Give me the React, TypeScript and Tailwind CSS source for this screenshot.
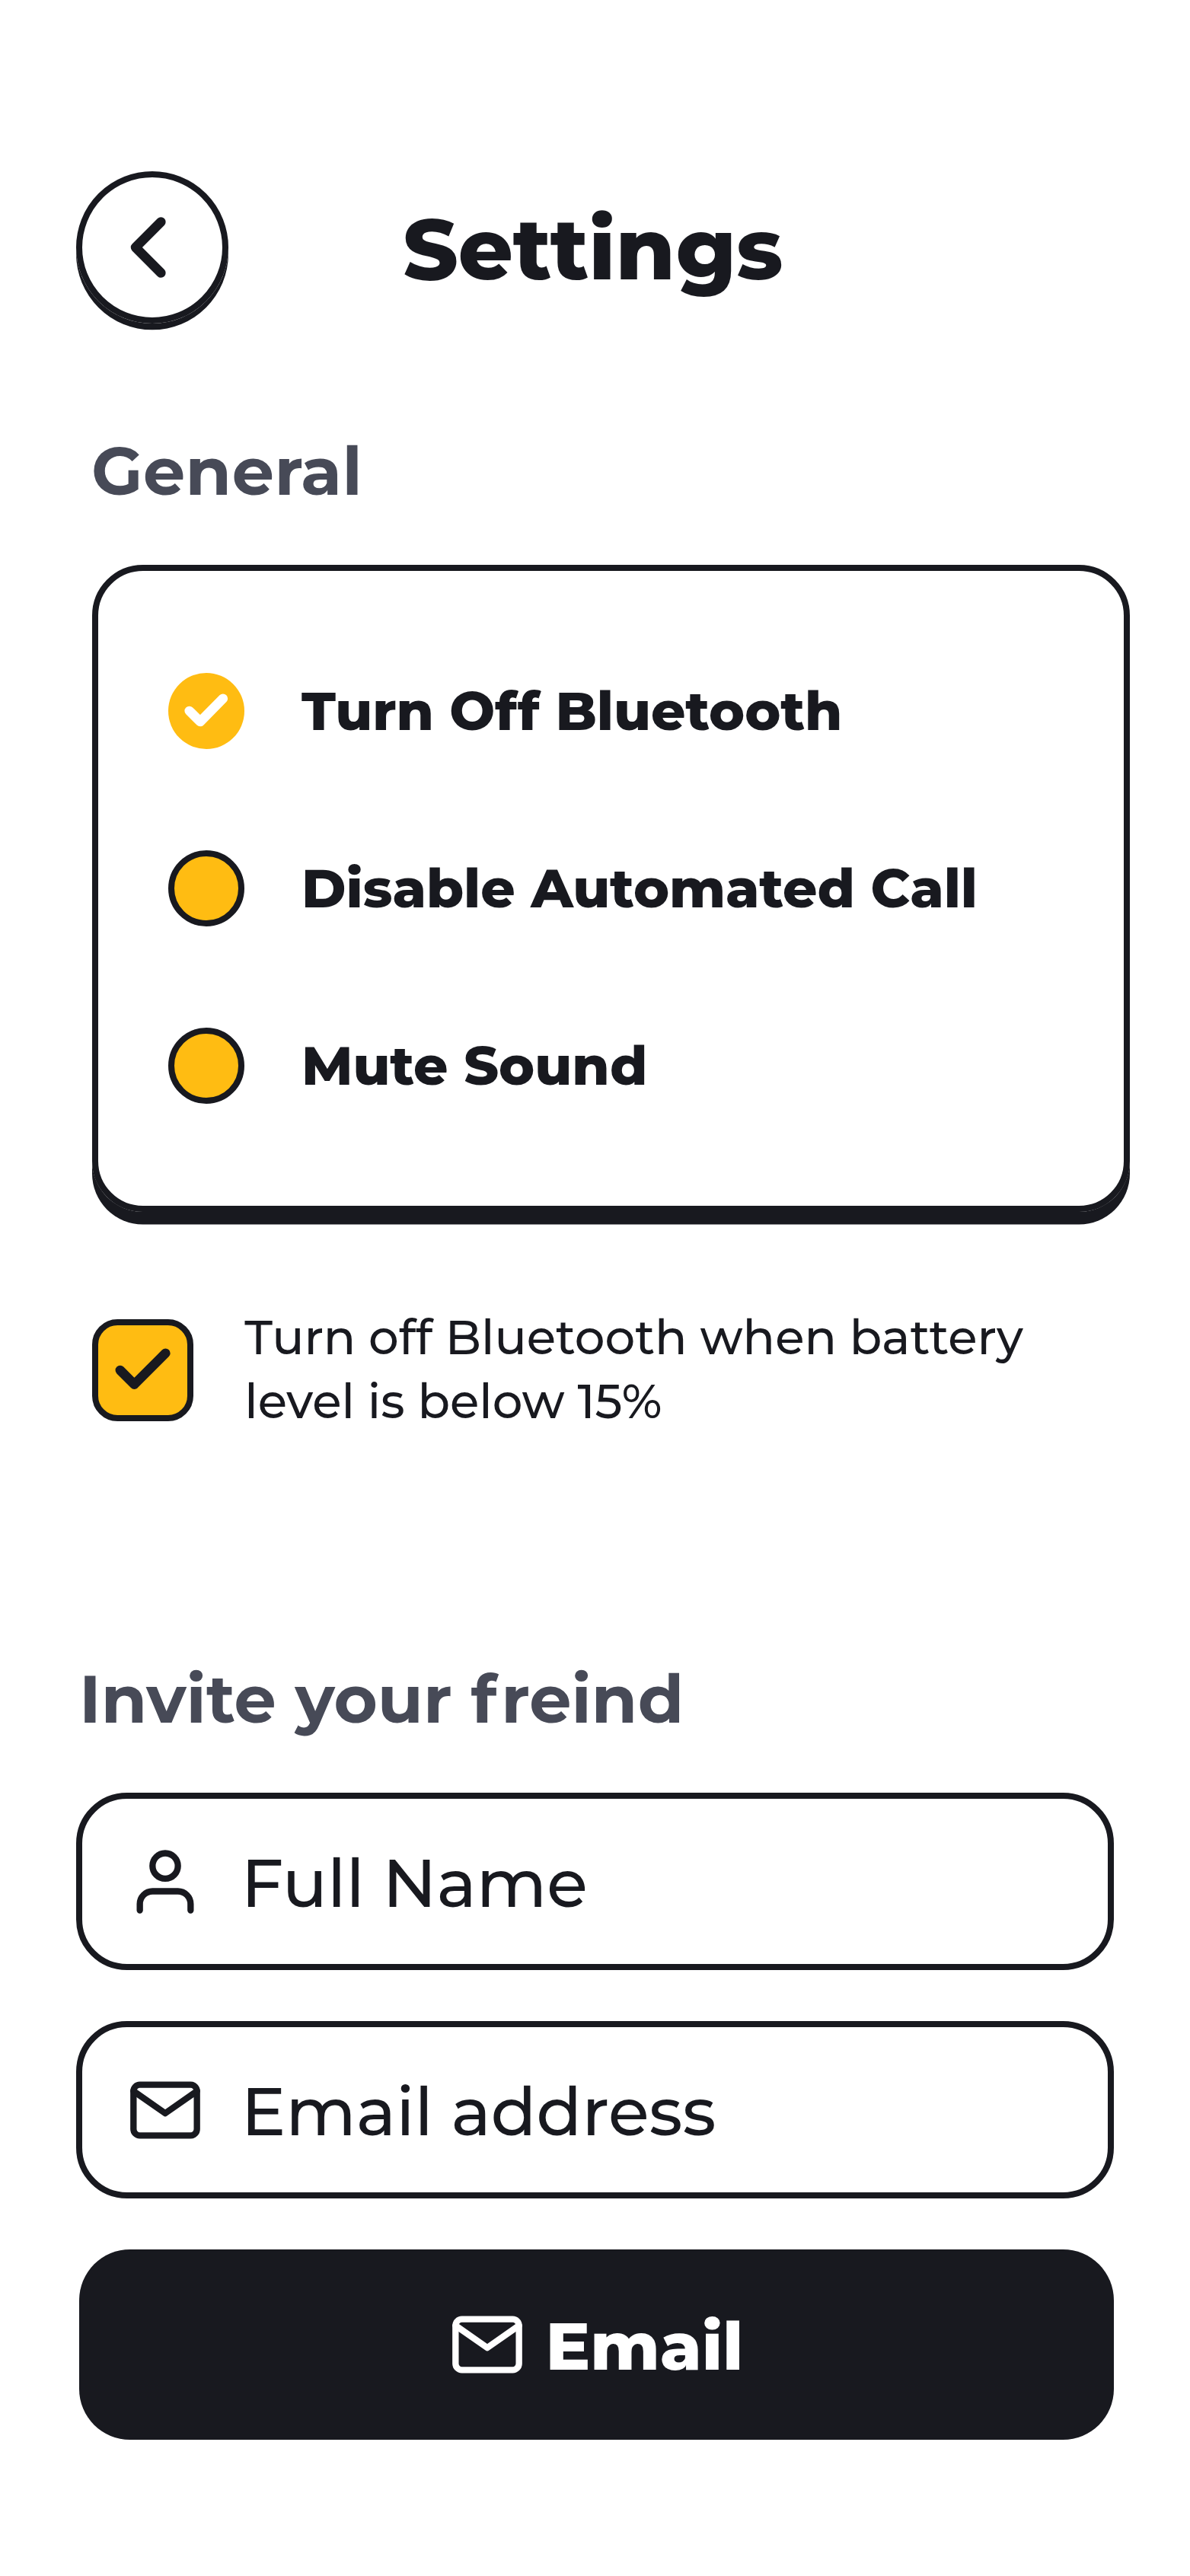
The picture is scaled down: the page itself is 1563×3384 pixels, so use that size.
import type { ReactNode } from 'react';

function UserIcon() {
  return (
    <svg className="size-[100px] shrink-0" viewBox="0 0 24 24" fill="none" stroke="currentColor" strokeWidth="2" strokeLinecap="round" strokeLinejoin="round">
      <path d="M20 21v-2a4 4 0 0 0-4-4H8a4 4 0 0 0-4 4v2" />
      <circle cx="12" cy="7" r="4" />
    </svg>
  );
}

function MailIcon() {
  return (
    <svg className="size-[100px] shrink-0" viewBox="0 0 24 24" fill="none" stroke="currentColor" strokeWidth="2" strokeLinecap="round" strokeLinejoin="round">
      <rect x="2" y="4" width="20" height="16" rx="2" />
      <path d="M22 6l-10 7L2 6" />
    </svg>
  );
}

function Option({ label, checked = false }: { label: string; checked?: boolean }) {
  return (
    <li className="flex h-[100px] items-center gap-[75px]">
      {checked ? (
        <span className="size-[100px] shrink-0 rounded-full bg-[#ffbc12]">
          <svg className="size-full" viewBox="0 0 100 100" fill="none" stroke="#fff" strokeWidth="12.5" strokeLinecap="round" strokeLinejoin="round">
            <path d="M27.7 49.9L42 64L71.9 33.7" />
          </svg>
        </span>
      ) : (
        <span className="size-[100px] shrink-0 rounded-full border-8 border-[#18191f] bg-[#ffbc12]" />
      )}
      <span className="text-[70.83px] leading-[100px] font-extrabold whitespace-nowrap">{label}</span>
    </li>
  );
}

function Field({ icon, label }: { icon: ReactNode; label: string }) {
  return (
    <div className="flex h-[233px] items-center gap-[50px] rounded-[66.7px] border-8 border-[#18191f] pl-[58.7px]">
      {icon}
      <span className="pt-[4px] text-[87.5px] leading-[106px] font-medium whitespace-nowrap">{label}</span>
    </div>
  );
}

export default function App() {
  return (
    <main className="flex h-[3384px] w-[1563px] flex-col bg-white pt-[225px] font-['Montserrat','Inter',sans-serif] text-[#18191f]">
      <header className="ml-[100px] flex h-[200px] items-center gap-[229px]">
        <button className="size-[200px] shrink-0 rounded-full border-8 border-[#18191f] shadow-[0_8.3px_0_#18191f]">
          <svg className="size-full" viewBox="108 233 184 184" fill="none" stroke="currentColor" strokeWidth="12.5" strokeLinecap="round" strokeLinejoin="round">
            <path d="M211.4 291.5L178 325L211.4 358.5" />
          </svg>
        </button>
        <h1 className="pt-[3px] text-[112.5px] leading-[136px] font-extrabold">Settings</h1>
      </header>

      <h2 className="mt-[141px] ml-[120px] text-[87.5px] leading-[106px] font-bold tracking-[0.42px] text-[#474a57]">General</h2>
      <ul className="mt-[70px] ml-[121px] flex h-[850px] w-[1363px] shrink-0 flex-col gap-[133.3px] rounded-[66.7px] border-8 border-[#18191f] pt-[133.5px] pl-[92px] shadow-[0_16.5px_0_#18191f]">
        <Option label="Turn Off Bluetooth" checked />
        <Option label="Disable Automated Call" />
        <Option label="Mute Sound" />
      </ul>

      <div className="mt-[125px] ml-[121px] flex h-[166px] items-center gap-[67px]">
        <span className="size-[133.3px] shrink-0 rounded-[33.3px] border-8 border-[#18191f] bg-[#ffbc12]">
          <svg className="size-full" viewBox="8 8 117.3 117.3" fill="none" stroke="currentColor" strokeWidth="12.5" strokeLinecap="round" strokeLinejoin="round">
            <path d="M36.8 67L55.4 85.7L96.4 44.7" />
          </svg>
        </span>
        <p className="pb-[3px] text-[62.5px] leading-[83.3px] font-medium whitespace-nowrap">
          Turn off Bluetooth when battery
          <br />
          level is below 15%
        </p>
      </div>

      <h2 className="mt-[296px] ml-[104px] text-[87.5px] leading-[106px] font-bold text-[#474a57]">
        Invite your <span className="tracking-[6px]">f</span>reind
      </h2>
      <form className="mt-[70px] ml-[100px] flex w-[1363px] flex-col gap-[67px]">
        <Field icon={<UserIcon />} label="Full Name" />
        <Field icon={<MailIcon />} label="Email address" />
        <button type="button" className="ml-[4px] flex h-[250px] items-center gap-[26.5px] rounded-[66.7px] bg-[#18191f] pl-[486px] text-white">
          <MailIcon />
          <span className="pt-[3px] text-[87.5px] leading-[106px] font-extrabold">Email</span>
        </button>
      </form>
    </main>
  );
}
